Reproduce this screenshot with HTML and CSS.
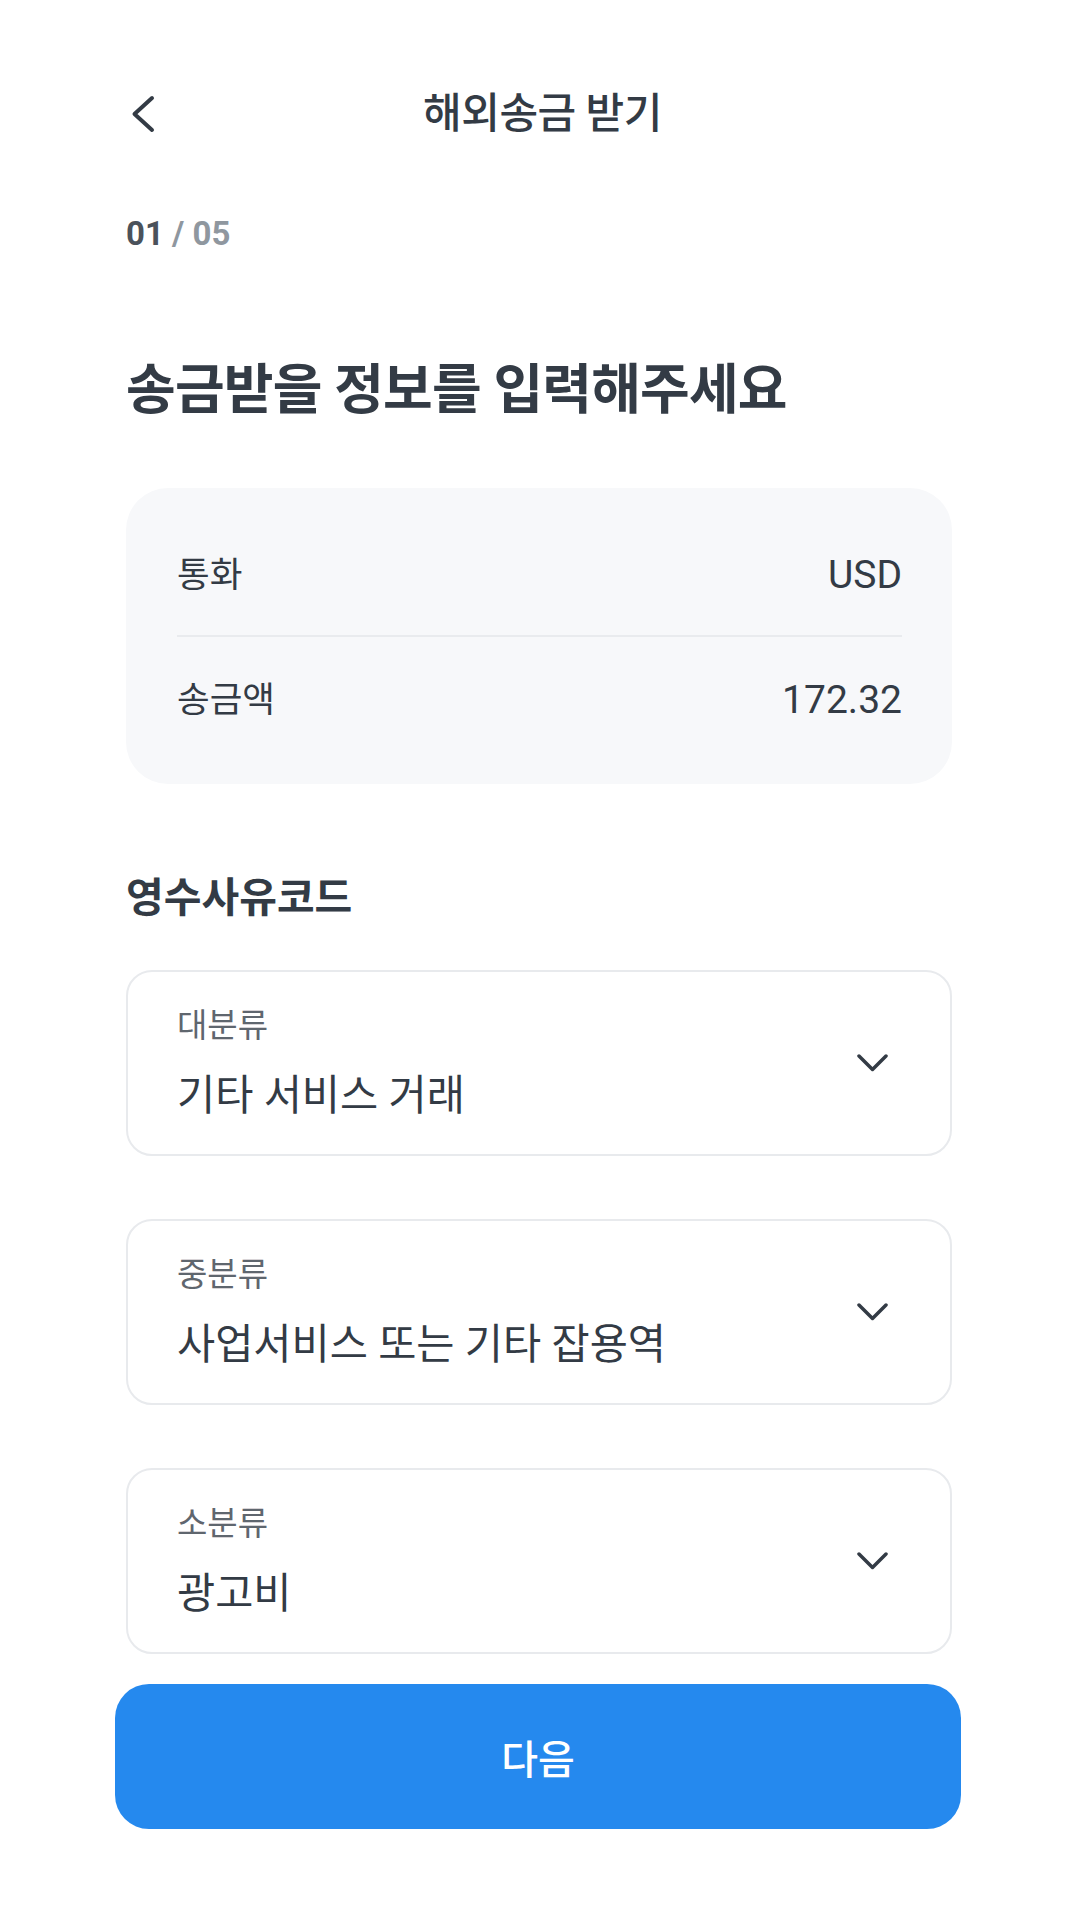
FILE: index.html
```html
<!DOCTYPE html>
<html lang="ko">
<head>
<meta charset="utf-8">
<title>해외송금 받기</title>
<link rel="stylesheet" href="styles.css">
</head>
<body>
<div class="screen">
  <header class="topbar">
    <button class="back" aria-label="뒤로">
      <svg width="24" height="40" viewBox="0 0 24 40"><path d="M21 4 L3.5 20 L21 36" fill="none" stroke="#333b45" stroke-width="4" stroke-linecap="round" stroke-linejoin="round"/></svg>
    </button>
    <h1 class="topbar-title">해외송금 받기</h1>
    <span class="topbar-spacer"></span>
  </header>

  <main class="content">
    <div class="step"><span class="step-cur">01</span><span class="step-total"> / 05</span></div>
    <h2 class="headline">송금받을 정보를 입력해주세요</h2>

    <section class="summary">
      <div class="summary-row"><span>통화</span><span class="num">USD</span></div>
      <div class="divider"></div>
      <div class="summary-row row-2"><span>송금액</span><span class="num">172.32</span></div>
    </section>

    <h3 class="section-title">영수사유코드</h3>

    <div class="selects">
      <div class="select">
        <div class="select-text">
          <span class="select-label">대분류</span>
          <span class="select-value">기타 서비스 거래</span>
        </div>
        <svg class="chev" width="31" height="18" viewBox="0 0 31 18"><path d="M2 2 L15.5 15.5 L29 2" fill="none" stroke="#333b45" stroke-width="3.5" stroke-linecap="round" stroke-linejoin="round"/></svg>
      </div>
      <div class="select">
        <div class="select-text">
          <span class="select-label">중분류</span>
          <span class="select-value">사업서비스 또는 기타 잡용역</span>
        </div>
        <svg class="chev" width="31" height="18" viewBox="0 0 31 18"><path d="M2 2 L15.5 15.5 L29 2" fill="none" stroke="#333b45" stroke-width="3.5" stroke-linecap="round" stroke-linejoin="round"/></svg>
      </div>
      <div class="select">
        <div class="select-text">
          <span class="select-label">소분류</span>
          <span class="select-value">광고비</span>
        </div>
        <svg class="chev" width="31" height="18" viewBox="0 0 31 18"><path d="M2 2 L15.5 15.5 L29 2" fill="none" stroke="#333b45" stroke-width="3.5" stroke-linecap="round" stroke-linejoin="round"/></svg>
      </div>
    </div>
  </main>

  <footer class="footer">
    <button class="cta">다음</button>
  </footer>
</div>
</body>
</html>
```

FILE: styles.css
```css
* { box-sizing: border-box; }

html, body {
  margin: 0;
  padding: 0;
  background: #ffffff;
}

body {
  font-family: Roboto, "Noto Sans CJK KR", sans-serif;
  color: #333b45;
  width: 1080px;
  height: 1920px;
  overflow: hidden;
}

.screen {
  padding-top: 54px;
}

.topbar {
  height: 120px;
  padding: 0 126px 0 131px;
  display: grid;
  grid-template-columns: 1fr auto 1fr;
  align-items: center;
}

.back {
  justify-self: start;
  background: none;
  border: 0;
  padding: 0;
  width: 24px;
  height: 40px;
  display: flex;
}

.topbar-title {
  margin: 0;
  font-size: 42px;
  line-height: 56px;
  font-weight: 500;
  color: #333b45;
  letter-spacing: -0.5px;
}

.content {
  padding: 0 128px 0 126px;
}

.step {
  margin-top: 40px;
  font-size: 33px;
  line-height: 40px;
  font-weight: 700;
}

.step-cur { color: #4b525b; }
.step-total { color: #8f979f; }

.headline {
  margin: 102px 0 0;
  font-size: 54px;
  line-height: 70px;
  font-weight: 700;
  color: #333b45;
  letter-spacing: -0.8px;
}

.summary {
  margin-top: 62px;
  background: #f7f8fa;
  border-radius: 42px;
  padding: 62px 50px 59px 51px;
}

.summary-row {
  display: flex;
  justify-content: space-between;
  align-items: center;
  font-size: 35.5px;
  line-height: 50px;
  color: #333b45;
}

.summary-row .num {
  font-size: 39px;
}

.divider {
  margin: 35px 0 38px;
  height: 2px;
  background: #e9ebee;
}

.section-title {
  margin: 86px 0 0;
  font-size: 41px;
  line-height: 56px;
  font-weight: 700;
  color: #333b45;
}

.selects {
  margin-top: 44px;
  display: flex;
  flex-direction: column;
  gap: 63px;
}

.select {
  height: 186px;
  border: 2px solid #e8eaed;
  border-radius: 26px;
  padding: 0 62px 0 49px;
  display: flex;
  align-items: center;
  justify-content: space-between;
}

.select-text {
  display: flex;
  flex-direction: column;
  gap: 22px;
}

.select-label {
  font-size: 33px;
  line-height: 44px;
  color: #5f666e;
}

.select-value {
  font-size: 41.5px;
  line-height: 52px;
  color: #333b45;
}

.chev {
  flex: none;
}

.footer {
  padding: 30px 119px 0 115px;
}

.cta {
  width: 100%;
  height: 145px;
  border: 0;
  border-radius: 34px;
  background: #2589ee;
  color: #ffffff;
  font-family: Roboto, "Noto Sans CJK KR", sans-serif;
  font-size: 40px;
  font-weight: 500;
}
```
